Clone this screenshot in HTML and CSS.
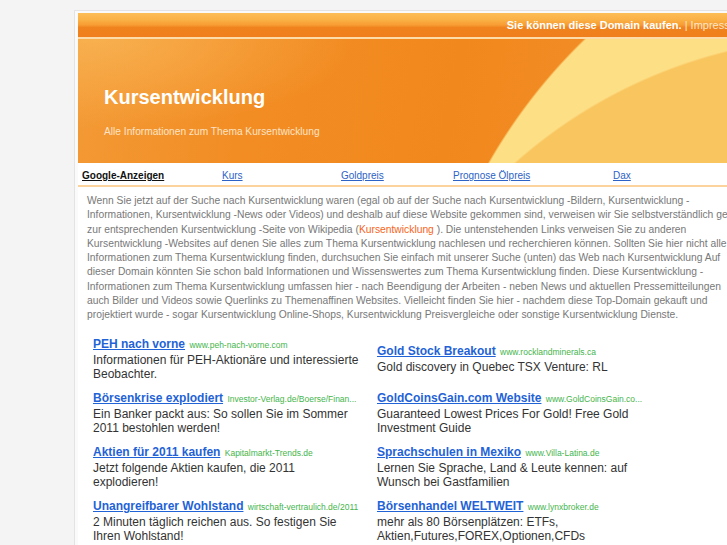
FILE: index.html
```html
<!DOCTYPE html>
<html lang="de">
<head>
<meta charset="utf-8">
<title>Kursentwicklung</title>
<link rel="stylesheet" href="styles.css">
</head>
<body>
<div class="page">
  <div class="frame">
    <div class="topbar"><span class="buy">Sie können diese Domain kaufen.</span> <span class="sep">|</span> <span class="imp">Impressum</span></div>
    <div class="header">
      <h1 class="title">Kursentwicklung</h1>
      <p class="subtitle">Alle Informationen zum Thema Kursentwicklung</p>
    </div>
    <div class="nav">
      <a class="nav-item nav-first" href="#">Google-Anzeigen</a>
      <a class="nav-item w119" href="#">Kurs</a>
      <a class="nav-item w112" href="#">Goldpreis</a>
      <a class="nav-item w160" href="#">Prognose Ölpreis</a>
      <a class="nav-item" href="#">Dax</a>
    </div>
    <div class="content">
      <p class="intro">Wenn Sie jetzt auf der Suche nach Kursentwicklung waren (egal ob auf der Suche nach Kursentwicklung -Bildern, Kursentwicklung -Informationen, Kursentwicklung -News oder Videos) und deshalb auf diese Website gekommen sind, verweisen wir Sie selbstverständlich gerne zur entsprechenden Kursentwicklung -Seite von Wikipedia (<a class="wiki" href="#">Kursentwicklung</a> ). Die untenstehenden Links verweisen Sie zu anderen Kursentwicklung -Websites auf denen Sie alles zum Thema Kursentwicklung nachlesen und recherchieren können. Sollten Sie hier nicht alle Informationen zum Thema Kursentwicklung finden, durchsuchen Sie einfach mit unserer Suche (unten) das Web nach Kursentwicklung Auf dieser Domain könnten Sie schon bald Informationen und Wissenswertes zum Thema Kursentwicklung finden. Diese Kursentwicklung -Informationen zum Thema Kursentwicklung umfassen hier - nach Beendigung der Arbeiten - neben News und aktuellen Pressemitteilungen auch Bilder und Videos sowie Querlinks zu Themenaffinen Websites. Vielleicht finden Sie hier - nachdem diese Top-Domain gekauft und projektiert wurde - sogar Kursentwicklung Online-Shops, Kursentwicklung Preisvergleiche oder sonstige Kursentwicklung Dienste.</p>
      <div class="ads">
        <div class="ad">
          <div class="ad-head"><a class="ad-title" href="#">PEH nach vorne</a> <span class="ad-url">www.peh-nach-vorne.com</span></div>
          <div class="ad-desc">Informationen für PEH-Aktionäre und interessierte Beobachter.</div>
        </div>
        <div class="ad">
          <div class="ad-head"><a class="ad-title" href="#">Gold Stock Breakout</a> <span class="ad-url">www.rocklandminerals.ca</span></div>
          <div class="ad-desc">Gold discovery in Quebec TSX Venture: RL</div>
        </div>
        <div class="ad">
          <div class="ad-head"><a class="ad-title" href="#">Börsenkrise explodiert</a> <span class="ad-url">Investor-Verlag.de/Boerse/Finan...</span></div>
          <div class="ad-desc">Ein Banker packt aus: So sollen Sie im Sommer 2011 bestohlen werden!</div>
        </div>
        <div class="ad">
          <div class="ad-head"><a class="ad-title" href="#">GoldCoinsGain.com Website</a> <span class="ad-url">www.GoldCoinsGain.co...</span></div>
          <div class="ad-desc">Guaranteed Lowest Prices For Gold! Free Gold Investment Guide</div>
        </div>
        <div class="ad">
          <div class="ad-head"><a class="ad-title" href="#">Aktien für 2011 kaufen</a> <span class="ad-url">Kapitalmarkt-Trends.de</span></div>
          <div class="ad-desc">Jetzt folgende Aktien kaufen, die 2011 explodieren!</div>
        </div>
        <div class="ad">
          <div class="ad-head"><a class="ad-title" href="#">Sprachschulen in Mexiko</a> <span class="ad-url">www.Villa-Latina.de</span></div>
          <div class="ad-desc">Lernen Sie Sprache, Land &amp; Leute kennen: auf Wunsch bei Gastfamilien</div>
        </div>
        <div class="ad">
          <div class="ad-head"><a class="ad-title" href="#">Unangreifbarer Wohlstand</a> <span class="ad-url">wirtschaft-vertraulich.de/2011</span></div>
          <div class="ad-desc">2 Minuten täglich reichen aus. So festigen Sie Ihren Wohlstand!</div>
        </div>
        <div class="ad">
          <div class="ad-head"><a class="ad-title" href="#">Börsenhandel WELTWEIT</a> <span class="ad-url">www.lynxbroker.de</span></div>
          <div class="ad-desc">mehr als 80 Börsenplätzen: ETFs, Aktien,Futures,FOREX,Optionen,CFDs</div>
        </div>
      </div>
    </div>
  </div>
</div>
</body>
</html>
```

FILE: styles.css
```css
html, body {
  margin: 0;
  padding: 0;
}

body {
  background: #f4f4f4;
  font-family: "Liberation Sans", Arial, Helvetica, sans-serif;
  overflow: hidden;
}

.page {
  padding: 10px 0 0 74px;
  width: 800px;
}

.frame {
  width: 680px;
  border: 1px solid #e3e3e3;
  padding: 2px 3px 0 3px;
  background: #fafafa;
}

/* top bar */
.topbar {
  height: 24px;
  line-height: 24px;
  border-bottom: 2px solid #fddcaa;
  background: linear-gradient(to bottom, #fdbe57 0%, #fab044 30%, #f79c33 50%, #f0831e 60%, #ef7f1c 100%);
  text-align: right;
  padding-right: 13px;
  font-size: 11px;
  color: #fff;
  white-space: nowrap;
}

.buy {
  font-weight: bold;
}

.sep,
.imp {
  color: #fde5c6;
}

/* header */
.header {
  height: 124px;
  box-sizing: border-box;
  padding: 47px 0 0 26px;
  background:
    radial-gradient(circle 499px at 768px 496px, #f9c55f 497px, rgba(249, 197, 95, 0) 499px),
    radial-gradient(circle 554px at 891px 398px, #fddf86 552px, rgba(253, 223, 134, 0) 554px),
    radial-gradient(ellipse 260px 90px at 20px 0px, rgba(250, 185, 90, 0.7), rgba(250, 185, 90, 0) 100%),
    linear-gradient(100deg, #f39a36 0%, #f28d24 25%, #f1881d 55%, #f39130 100%);
}

.title {
  margin: 0;
  font-size: 20px;
  line-height: 23px;
  font-weight: bold;
  color: #fff;
}

.subtitle {
  margin: 17px 0 0 0;
  font-size: 10.2px;
  line-height: 12px;
  color: #fde3c6;
}

/* nav */
.nav {
  display: flex;
  height: 19px;
  padding: 3px 0 0 4px;
  background: #fff;
  border-bottom: 2px solid #fcd39c;
  font-size: 10px;
  line-height: 19px;
}

.nav-item {
  display: block;
  color: #2d62c6;
  text-decoration: underline;
  white-space: nowrap;
}

.nav-first {
  width: 140px;
  color: #111;
  font-weight: bold;
}

.w119 { width: 119px; }
.w112 { width: 112px; }
.w160 { width: 160px; }

/* content */
.content {
  background: #fff;
  padding: 7px 9px 20px 9px;
}

.intro {
  width: 659px;
  margin: 0;
  font-size: 10.3px;
  line-height: 14.3px;
  color: #787878;
}

.wiki {
  color: #f6641a;
  text-decoration: none;
}

.ads {
  display: grid;
  grid-template-columns: 268px 268px;
  column-gap: 16px;
  row-gap: 8px;
  align-items: center;
  margin: 13px 0 0 6px;
}

.ad {
  font-size: 12px;
}

.ad-head {
  height: 17px;
  line-height: 17px;
  white-space: nowrap;
}

.ad-title {
  font-size: 12px;
  font-weight: bold;
  color: #1f63d6;
  text-decoration: underline;
}

.ad-url {
  font-size: 8.5px;
  color: #45b54c;
  margin-left: 1px;
}

.ad-desc {
  font-size: 12px;
  line-height: 14.5px;
  color: #333;
}
```
